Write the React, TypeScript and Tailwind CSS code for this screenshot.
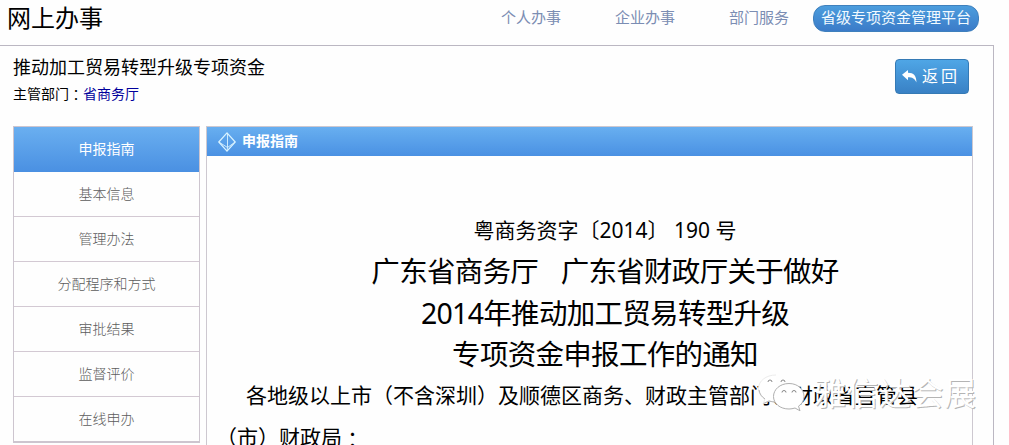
import clsx from "clsx";

const navItems = ["个人办事", "企业办事", "部门服务"];

const menuItems = [
    "申报指南",
    "基本信息",
    "管理办法",
    "分配程序和方式",
    "审批结果",
    "监督评价",
    "在线申办",
];

// Full-width colon, centred in its box
function Colon() {
    return <span className="relative top-[0.1em] font-['Noto_Sans_CJK_TC',sans-serif]">：</span>;
}

function BackIcon() {
    return (
        <svg width="15" height="13" viewBox="0 0 15 13" fill="#fff">
            <path d="M0 4.800 6 0v2.700c5.600 0 8.600 3 8.400 9.800C12.600 8.600 10.500 7.300 6 7.300v2.900z" />
        </svg>
    );
}

function DiamondIcon() {
    return (
        <svg width="18" height="20" viewBox="0 0 18 20" fill="none" stroke="#d9f3ff" strokeLinejoin="round">
            <path d="M9 .8 17.200 10 9 19.200.8 10z" strokeWidth="1.200" />
            <path d="M9.500 1v14.500M.8 10l8.700 5.500 7.700-5.500M9.500 15.500 9 19.200" strokeWidth="0.900" />
        </svg>
    );
}

function WatermarkIcon() {
    return (
        <svg width="50" height="38" viewBox="0 0 50 38" fill="#fff" strokeWidth="1">
            <path d="M19 1C9 1 1.500 7 1.500 14.500c0 4.500 2.500 8 6.500 10.500l-2 5 6-3c3 .8 5 1 8 1" stroke="#ececec" />
            <path d="M2 16c.5 4 3 7 6 9M6.500 29.500l5.500-2.500c3 .8 5 1 7 1" fill="none" stroke="#b5b5b5" />
            <path d="M32 9.500c-9 0-15.500 6-15.500 13S23 35 32 35c2 0 4-.4 6-1l5 2.800-1.500-4.600c3.500-2.300 5.500-5.500 5.500-9.700C47 15.500 41 9.500 32 9.500z" stroke="#b0b0b0" />
            <path d="M11 8a2 2 0 0 1 4 0M24 8a2 2 0 0 1 4 0M25 18.500a2 2 0 0 1 4 0M35 18.500a2 2 0 0 1 4 0" fill="none" stroke="#888" />
        </svg>
    );
}

function Header() {
    return (
        <header className="flex h-[45px] justify-between pr-[30px] pl-[7px]">
            <h1 className="text-2xl leading-9">网上办事</h1>
            <nav className="flex text-[15px] text-[#7b8db3]">
                {navItems.map((item) => (
                    <a key={item} className="w-[114px] leading-[35px]">
                        {item}
                    </a>
                ))}
                <a className="-ml-[30px] mt-[5px] h-[27px] w-[166px] rounded-xl border border-[#3f80bd] bg-linear-to-b from-[#4c9ddd] to-[#3b7bc8] text-center leading-[23px] text-[#f2faff]">
                    省级专项资金管理平台
                </a>
            </nav>
        </header>
    );
}

function Sidebar() {
    return (
        <ul className="h-[317px] w-[187px] border border-b-2 border-[#cdc5cf] text-center text-sm font-light text-[#5c5c5c]">
            {menuItems.map((item, index) => (
                <li
                    key={item}
                    className={clsx(
                        "h-[45px] leading-[43px]",
                        index === 0 && "bg-linear-to-b from-[#6aaff0] to-[#4a90e2] font-normal text-white",
                        index > 0 && index < menuItems.length - 1 && "border-b border-[#d3c9d3]"
                    )}
                >
                    {item}
                </li>
            ))}
        </ul>
    );
}

function Article() {
    return (
        <section className="h-[330px] w-[767px] border border-[#cdc8d0]">
            <h3 className="flex h-[29px] items-center gap-1.5 bg-linear-to-b from-[#68aff0] to-[#4a91e3] pl-[11px] text-sm font-bold text-white">
                <DiamondIcon />
                <span className="-mt-0.5">申报指南</span>
            </h3>
            <div className="w-[787px] pt-[53px] pl-[9px] text-[21px] leading-[42px] whitespace-nowrap">
                <p className="text-center">粤商务资字〔2014〕 190 号</p>
                <div className="text-center text-[28.500px] leading-[41.500px] tracking-[-0.700px]">
                    <p className="whitespace-pre [word-spacing:0.8px]">广东省商务厅   广东省财政厅关于做好</p>
                    <p>2014年推动加工贸易转型升级</p>
                    <p>专项资金申报工作的通知</p>
                </div>
                <p className="pl-[30px] leading-[39px]">各地级以上市（不含深圳）及顺德区商务、财政主管部门、财政省直管县</p>
                <p>
                    （市）财政局
                    <Colon />
                </p>
            </div>
        </section>
    );
}

export default function App() {
    return (
        <div className="relative h-[445px] w-[1009px] overflow-hidden bg-[#fefefe] font-['Noto_Sans','Noto_Sans_CJK_SC',sans-serif] text-black">
            <Header />
            <main className="h-[400px] w-[994px] border-t border-r border-[#bbb7c2] pl-[13px]">
                <div className="flex h-[80px] justify-between pr-6">
                    <div className="pt-2">
                        <h2 className="text-lg leading-[26px]">推动加工贸易转型升级专项资金</h2>
                        <p className="text-sm leading-[26px]">
                            主管部门
                            <Colon />
                            <a className="text-[#00009c]">省商务厅</a>
                        </p>
                    </div>
                    <button className="mt-[13px] flex h-[35px] w-[74px] items-center gap-[5px] rounded border border-[#357ab5] bg-linear-to-b from-[#4fa6e6] to-[#3981c5] pl-1.5 text-base tracking-[3px] text-white">
                        <BackIcon />
                        <span className="-mt-0.5">返回</span>
                    </button>
                </div>
                <div className="flex gap-1.5">
                    <Sidebar />
                    <Article />
                </div>
            </main>
            <div className="absolute top-[373px] left-[757px] flex items-center gap-[7px]">
                <WatermarkIcon />
                <span className="text-[32px] leading-10 tracking-[0.500px] whitespace-nowrap text-white [text-shadow:1px_1px_0_#b4b4b4]">雅信达会展</span>
            </div>
        </div>
    );
}
